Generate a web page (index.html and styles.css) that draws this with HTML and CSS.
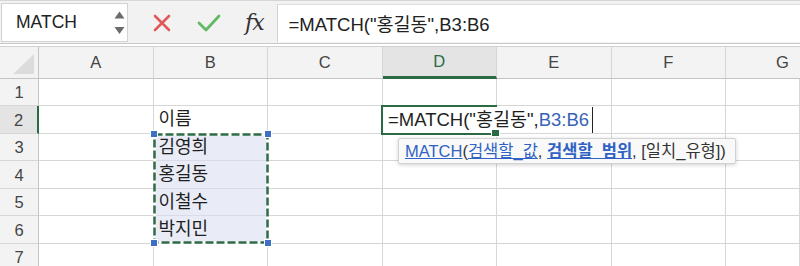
FILE: index.html
```html
<!DOCTYPE html>
<html lang="ko">
    <head>
        <meta charset="utf-8">
        <title>MATCH</title>
        <link rel="stylesheet" href="styles.css">
    </head>
    <body>
        <div class="bar">
            <div class="namebox">
                <span>MATCH</span>
                <svg class="spin" width="11" height="24" viewBox="0 0 11 24">
                    <path d="M0.5 7.5 L5.5 0.5 L10.5 7.5 Z" fill="#6b6b6b"/>
                    <path d="M0.5 16 L5.5 23 L10.5 16 Z" fill="#6b6b6b"/>
                </svg>
            </div>
            <svg class="ico cancel" width="18" height="18" viewBox="0 0 18 18">
                <path d="M2 2 L16 16 M16 2 L2 16" stroke="#df5a58" stroke-width="2.6" stroke-linecap="round"/>
            </svg>
            <svg class="ico ok" width="24" height="18" viewBox="0 0 24 18">
                <path d="M2 9 L9 16 L22 2" stroke="#62b964" stroke-width="2.8" fill="none" stroke-linecap="round" stroke-linejoin="round"/>
            </svg>
            <span class="fx">fx</span>
            <div class="formula">=MATCH("홍길동",B3:B6</div>
        </div>

        <div class="sheet">
            <div class="corner"><span></span></div>
            <div class="colhead">A</div>
            <div class="colhead">B</div>
            <div class="colhead">C</div>
            <div class="colhead on">D</div>
            <div class="colhead">E</div>
            <div class="colhead">F</div>
            <div class="colhead last">G</div>

            <div class="rowhead">1</div>
            <div class="cell"></div><div class="cell"></div><div class="cell"></div><div class="cell"></div><div class="cell"></div><div class="cell"></div><div class="cell"></div>

            <div class="rowhead on">2</div>
            <div class="cell"></div><div class="cell">이름</div><div class="cell"></div><div class="cell"></div><div class="cell"></div><div class="cell"></div><div class="cell"></div>

            <div class="rowhead">3</div>
            <div class="cell"></div><div class="cell sel">김영희</div><div class="cell"></div><div class="cell"></div><div class="cell"></div><div class="cell"></div><div class="cell"></div>

            <div class="rowhead">4</div>
            <div class="cell"></div><div class="cell sel">홍길동</div><div class="cell"></div><div class="cell"></div><div class="cell"></div><div class="cell"></div><div class="cell"></div>

            <div class="rowhead">5</div>
            <div class="cell"></div><div class="cell sel">이철수</div><div class="cell"></div><div class="cell"></div><div class="cell"></div><div class="cell"></div><div class="cell"></div>

            <div class="rowhead">6</div>
            <div class="cell"></div><div class="cell sel">박지민</div><div class="cell"></div><div class="cell"></div><div class="cell"></div><div class="cell"></div><div class="cell"></div>

            <div class="rowhead">7</div>
            <div class="cell"></div><div class="cell"></div><div class="cell"></div><div class="cell"></div><div class="cell"></div><div class="cell"></div><div class="cell"></div>

            <!-- range picked by the formula: B3:B6 -->
            <div class="range">
                <svg class="ants" width="116" height="111">
                    <rect x="1.5" y="1.5" width="113" height="108" fill="none" stroke="#fff" stroke-width="2.5"/>
                    <rect x="1.5" y="1.5" width="113" height="108" fill="none" stroke="#2f6b47" stroke-width="2.5" stroke-dasharray="8 3"/>
                </svg>
                <i class="h tl"></i><i class="h tr"></i><i class="h bl"></i><i class="h br"></i>
            </div>

            <!-- D2 in edit mode -->
            <div class="editor">
                <span class="etext">=MATCH("홍길동",<b>B3:B6</b></span>
                <i class="fill"></i>
            </div>

            <div class="tip"><a>MATCH</a>(<a>검색할_값</a>, <a class="cur">검색할_범위</a>, [일치_유형])</div>
        </div>
    </body>
</html>
```

FILE: styles.css
```css
body {
    margin: 0;
    width: 800px;
    height: 266px;
    overflow: hidden;
    background: #fff;
    font-family: "Liberation Sans", "Noto Sans CJK KR", sans-serif;
    color: #222;
}

/* formula bar */
.bar {
    display: flex;
    align-items: center;
    height: 44px;
    padding-top: 1px;
    background: #f2f2f2;
    border-top: 1px solid #d6d6d6;
    border-bottom: 1px solid #c9c9c9;
    box-sizing: border-box;
}
.namebox {
    display: flex;
    align-items: center;
    justify-content: space-between;
    width: 127px;
    height: 39px;
    margin-left: 1px;
    box-sizing: border-box;
    padding: 0 2px 0 14px;
    background: #fff;
    border: 1px solid #d3d3d3;
    font-size: 17.5px;
}
.spin {
    display: block;
}
.ico {
    display: block;
}
.cancel {
    margin-left: 25px;
}
.ok {
    margin-left: 26px;
}
.fx {
    margin-left: 24px;
    font-family: "DejaVu Serif", "Liberation Serif", serif;
    font-style: italic;
    font-size: 22px;
    color: #333;
    letter-spacing: -1px;
}
.formula {
    flex: 1;
    height: 38px;
    margin-left: 13px;
    padding-left: 11px;
    display: flex;
    align-items: center;
    background: #fff;
    border-left: 1px solid #d2d2d2;
    border-top: 1px solid #dedede;
    box-sizing: border-box;
    font-size: 18.5px;
}

/* grid */
.sheet {
    position: relative;
    margin-top: 2px;
    border-top: 1px solid #d0d0d0;
    display: grid;
    grid-template-columns: 39px repeat(6, 114.5px) 74px;
    grid-template-rows: 31.5px repeat(7, 27.5px);
}
.corner,
.colhead,
.rowhead,
.cell {
    box-sizing: border-box;
    border-right: 1px solid #d6d6d6;
    border-bottom: 1px solid #d6d6d6;
}
.corner {
    background: #f3f3f3;
    border-right-color: #c4c4c4;
    border-bottom-color: #c4c4c4;
    position: relative;
}
.corner span {
    position: absolute;
    right: 4px;
    bottom: 4px;
    width: 0;
    height: 0;
    border-left: 21px solid transparent;
    border-bottom: 20px solid #dcdcdc;
}
.colhead {
    background: #f3f3f3;
    border-bottom-color: #c4c4c4;
    display: flex;
    align-items: center;
    justify-content: center;
    font-size: 16.5px;
    color: #444;
}
.colhead.last {
    justify-content: flex-start;
    padding-left: 50px;
    border-right: none;
}
.colhead.on {
    background: #e4e4e4;
    color: #2b6b43;
    border-bottom: 3px solid #2b6b43;
}
.rowhead {
    background: #f3f3f3;
    border-right-color: #c4c4c4;
    display: flex;
    align-items: center;
    justify-content: center;
    font-size: 16.5px;
    color: #444;
    padding-top: 2px;
}
.rowhead.on {
    background: #e4e4e4;
    border-right: 2px solid #2b6b43;
}
.cell {
    padding-left: 5px;
    font-size: 18px;
    line-height: 27px;
    color: #1f1f1f;
    white-space: nowrap;
}
.cell.sel {
    background: #e9ecf7;
    border-bottom-color: #d9dce6;
}

.range {
    position: absolute;
    left: 152.5px;
    top: 86px;
    width: 116px;
    height: 111px;
}
.ants {
    display: block;
}
.h {
    position: absolute;
    width: 6px;
    height: 6px;
    background: #3d6fc6;
    border: 1px solid #fff;
}
.tl { left: -3px; top: -3px; }
.tr { right: -3px; top: -3px; }
.bl { left: -3px; bottom: -3px; }
.br { right: -3px; bottom: -3px; }

.editor {
    position: absolute;
    left: 381px;
    top: 58px;
    width: 116px;
    height: 30px;
    box-sizing: border-box;
    border: 2px solid #2b6b43;
    border-right: none;
}
.etext {
    position: absolute;
    left: 0;
    top: 0;
    padding: 0 3px 0 5px;
    height: 26px;
    line-height: 26px;
    background: #fff;
    font-size: 18.5px;
    white-space: nowrap;
    color: #1f1f1f;
    border-right: 1.5px solid #222;
}
.etext b {
    font-weight: normal;
    color: #3763b8;
}
.fill {
    position: absolute;
    right: -3px;
    bottom: -4px;
    width: 7px;
    height: 6px;
    background: #2b6b43;
    border: 1px solid #fff;
}

.tip {
    position: absolute;
    left: 398px;
    top: 91px;
    height: 26px;
    box-sizing: border-box;
    padding: 0 9px 0 6px;
    line-height: 24px;
    white-space: nowrap;
    background: #f9f9f9;
    border: 1px solid #d2d2d2;
    border-radius: 2px;
    box-shadow: 0 1px 4px rgba(0,0,0,.18);
    font-size: 16.5px;
    color: #333;
}
.tip a {
    color: #2f62c4;
    text-decoration: underline;
}
.tip a.cur {
    font-weight: bold;
}
```
